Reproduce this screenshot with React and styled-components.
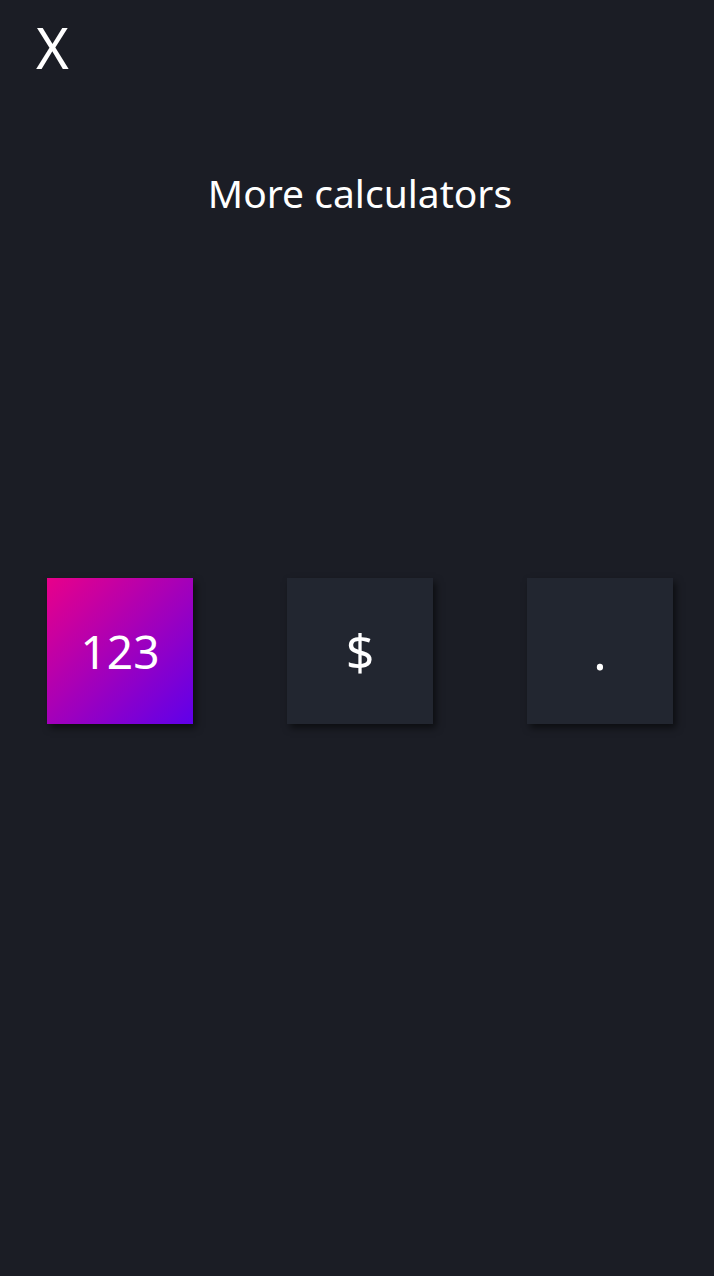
import styled, { createGlobalStyle } from "styled-components";

const GlobalStyle = createGlobalStyle`
  html, body {
    margin: 0;
    padding: 0;
    background: #1b1d25;
  }
  body {
    font-family: "Noto Sans", "Open Sans", sans-serif;
    color: #ffffff;
  }
`;

const Screen = styled.div`
  width: 714px;
  height: 1276px;
  background: #1b1d25;
  display: flex;
  flex-direction: column;
  overflow: hidden;
`;

const TopBar = styled.div`
  height: 96px;
  display: flex;
  align-items: center;
  padding-left: 36px;
`;

const CloseButton = styled.button`
  background: none;
  border: none;
  padding: 0;
  color: #ffffff;
  font-family: inherit;
  font-size: 56px;
  font-weight: 400;
  line-height: 1;
  cursor: pointer;
  margin-top: -2px;
`;

const Title = styled.h1`
  margin: 0;
  padding-top: 71px;
  text-align: center;
  font-size: 39px;
  font-weight: 400;
  line-height: 52px;
  padding-left: 6px;
`;

const TileRow = styled.div`
  margin-top: 359px;
  display: flex;
  gap: 94px;
  padding-left: 47px;
`;

const Tile = styled.button`
  width: 146px;
  height: 146px;
  border: none;
  padding: 0;
  display: flex;
  align-items: center;
  justify-content: center;
  color: #ffffff;
  font-family: inherit;
  font-size: ${({ $size }) => $size}px;
  font-weight: 400;
  background: ${({ $active }) =>
    $active ? "linear-gradient(135deg, #e8008a 0%, #5f00ea 100%)" : "#222630"};
  box-shadow: 3px 4px 7px rgba(0, 0, 0, 0.55);
  cursor: pointer;
`;

const tiles = [
  { label: "123", active: true, size: 46 },
  { label: "$", active: false, size: 50 },
  { label: ".", active: false, size: 50 },
];

export default function App() {
  return (
    <Screen>
      <GlobalStyle />
      <TopBar>
        <CloseButton>X</CloseButton>
      </TopBar>
      <Title>More calculators</Title>
      <TileRow>
        {tiles.map((t) => (
          <Tile key={t.label} $active={t.active} $size={t.size}>
            {t.label}
          </Tile>
        ))}
      </TileRow>
    </Screen>
  );
}
